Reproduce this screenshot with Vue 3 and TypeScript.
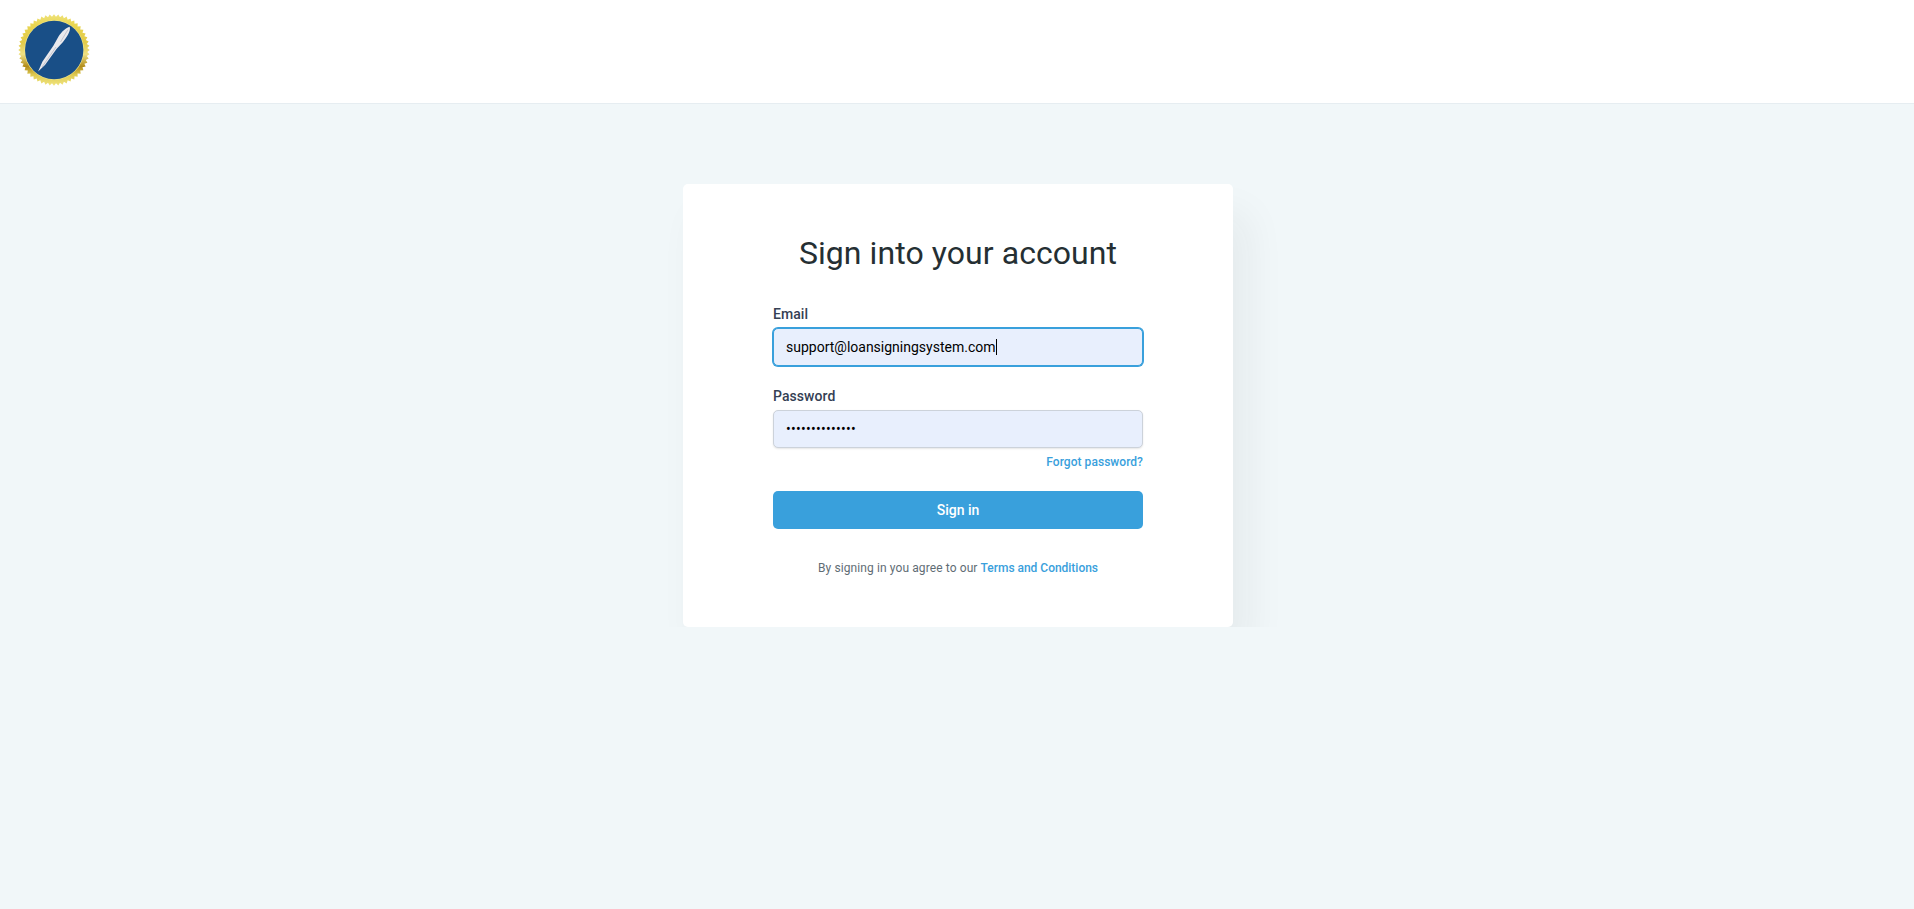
<script setup lang="ts">
import { ref } from 'vue'

const email = ref('support@loansigningsystem.com')
const password = ref('aaaaaaaaaaaaaa')

// Scalloped rim of the seal
const teeth = 52
const rim: string = Array.from({ length: teeth * 2 }, (_, i) => {
  const r = i % 2 ? 33.3 : 35.7
  const a = (Math.PI * i) / teeth
  return `${(36 + r * Math.cos(a)).toFixed(2)},${(36 + r * Math.sin(a)).toFixed(2)}`
}).join(' ')
</script>

<template>
  <div class="page">
    <header class="header">
      <svg class="logo" viewBox="0 0 72 72" width="72" height="72">
        <defs>
          <linearGradient id="gold" x1="0" y1="0" x2="0" y2="1">
            <stop offset="0" stop-color="#efe27a" />
            <stop offset="0.15" stop-color="#e8d550" />
            <stop offset="0.4" stop-color="#e3cb4a" />
            <stop offset="0.56" stop-color="#efe184" />
            <stop offset="0.73" stop-color="#b28d1c" />
            <stop offset="0.85" stop-color="#dfcb52" />
            <stop offset="1" stop-color="#f0e47e" />
          </linearGradient>
        </defs>
        <polygon :points="rim" fill="url(#gold)" />
        <circle cx="36.200" cy="36" r="29.800" fill="#f1e68a" />
        <circle cx="36.200" cy="36" r="29.200" fill="#194f87" />
        <path d="M51.700 12.800C48 13.500 43.500 18 40.500 22.500L35.500 31.500L24.500 47.500L20.100 57.500L27 51L38.500 35L45 28C49 23 53 17 51.700 12.800Z" fill="#e9e9ed" />
        <path d="M50 15.500L42.500 28M38 33L24 53" stroke="#bfbfc9" stroke-width="0.900" fill="none" />
      </svg>
    </header>

    <main class="main">
      <div class="clip">
        <form class="card" @submit.prevent>
          <h1 class="title">Sign into your account</h1>
          <label class="label" for="email">Email</label>
          <div class="field focused">
            <input id="email" v-model="email" class="input email" type="text" spellcheck="false" />
            <span class="caret"></span>
          </div>
          <label class="label second" for="password">Password</label>
          <div class="field">
            <input id="password" v-model="password" class="input password" type="password" />
          </div>
          <a class="forgot">Forgot password?</a>
          <button class="submit" type="submit">Sign in</button>
          <p class="terms">By signing in you agree to our <a class="link">Terms and Conditions</a></p>
        </form>
      </div>
    </main>
  </div>
</template>

<style>
body {
  background: #f1f7f9;
}
</style>

<style scoped>
.page {
  min-height: 909px;
  background: #f1f7f9;
  font-family: Roboto, "Liberation Sans", sans-serif;
}
.header {
  box-sizing: border-box;
  height: 104px;
  padding: 14px 18px;
  background: #fff;
  border-bottom: 1px solid #e6edf1;
}
.logo {
  display: block;
}
.clip {
  display: flex;
  justify-content: center;
  padding: 80px 0 0 2px;
  overflow: hidden;
}
.card {
  box-sizing: border-box;
  width: 550px;
  height: 443px;
  padding: 48px 90px 0;
  display: flex;
  flex-direction: column;
  background: #fff;
  border-radius: 5px;
  box-shadow: 15px 30px 40px rgba(26, 26, 26, 0.06);
}
.title {
  margin: 0;
  font-size: 32px;
  font-weight: 400;
  line-height: 42px;
  letter-spacing: 0.07px;
  text-align: center;
  white-space: nowrap;
  color: #252f33;
}
.label {
  margin-top: 30px;
  font-size: 14px;
  font-weight: 500;
  line-height: 20px;
  letter-spacing: 0.06px;
  color: #344054;
}
.second {
  margin-top: 20px;
}
.field {
  box-sizing: border-box;
  height: 38px;
  margin-top: 4px;
  padding: 0 12px;
  display: flex;
  align-items: center;
  background: #e8effd;
  border: 1px solid #ccd2da;
  border-radius: 5px;
  box-shadow: 0 1px 2px rgba(0, 0, 0, 0.1);
}
.focused {
  border-color: #39a0dc;
  box-shadow: 0 0 0 1px #39a0dc;
}
.input {
  width: 100%;
  min-width: 0;
  padding: 0;
  border: 0;
  outline: none;
  background: transparent;
  font-family: inherit;
  font-size: 14px;
  line-height: 20px;
  color: #000;
}
.email {
  width: 210px;
}
.password {
  letter-spacing: 0.27px;
}
.caret {
  width: 1px;
  height: 16px;
  background: #000;
}
.forgot {
  align-self: flex-end;
  margin-top: 4px;
  font-size: 12px;
  font-weight: 500;
  line-height: 20px;
  letter-spacing: 0.04px;
  color: #39a0dc;
}
.submit {
  height: 38px;
  margin-top: 19px;
  padding: 0;
  border: 0;
  border-radius: 5px;
  background: #39a0dc;
  font-family: inherit;
  font-size: 14px;
  font-weight: 500;
  color: #fff;
}
.terms {
  margin: 29px 0 0;
  font-size: 12px;
  line-height: 20px;
  letter-spacing: 0.1px;
  text-align: center;
  white-space: nowrap;
  color: #5f6d75;
}
.link {
  font-weight: 500;
  letter-spacing: -0.02px;
  color: #39a0dc;
}
</style>
